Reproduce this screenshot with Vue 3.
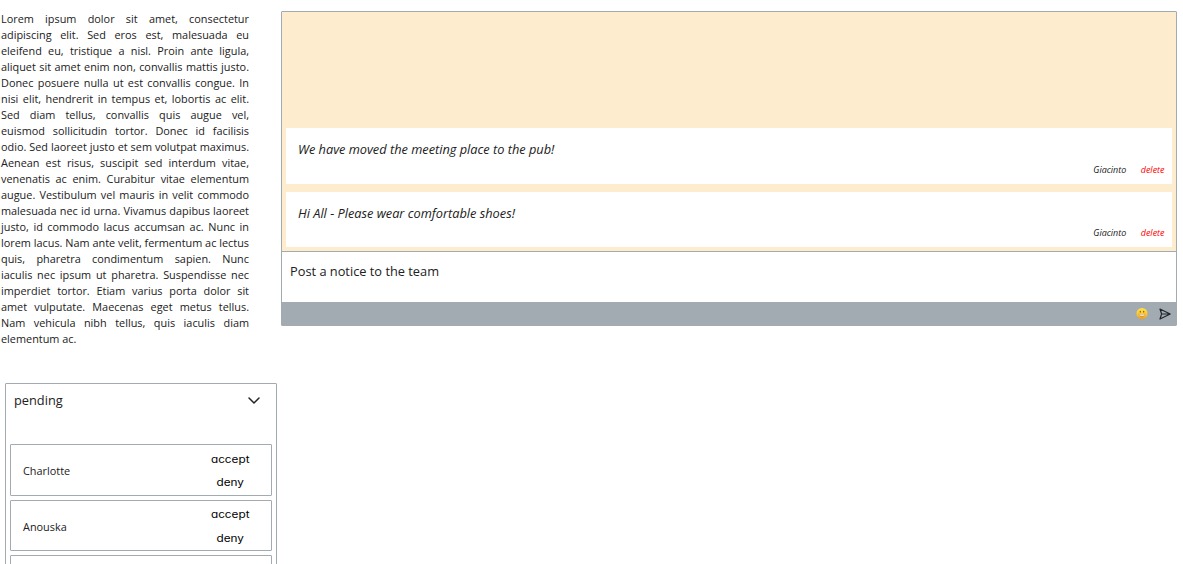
<script setup>
const notices = [
  { id: 1, text: 'We have moved the meeting place to the pub!', author: 'Giacinto' },
  { id: 2, text: 'Hi All - Please wear comfortable shoes!', author: 'Giacinto' },
]
const pending = ['Charlotte', 'Anouska', '']
</script>

<template>
  <div class="page">
    <aside class="side">
      <p class="about">
        Lorem ipsum dolor sit amet, consectetur adipiscing elit. Sed eros est, malesuada eu eleifend eu, tristique a nisl. Proin ante ligula, aliquet sit amet enim non, convallis mattis justo. Donec posuere nulla ut est convallis congue. In nisi elit, hendrerit in tempus et, lobortis ac elit. Sed diam tellus, convallis quis augue vel, euismod sollicitudin tortor. Donec id facilisis odio. Sed laoreet justo et sem volutpat maximus. Aenean est risus, suscipit sed interdum vitae, venenatis ac enim. Curabitur vitae elementum augue. Vestibulum vel mauris in velit commodo malesuada nec id urna. Vivamus dapibus laoreet justo, id commodo lacus accumsan ac. Nunc in lorem lacus. Nam ante velit, fermentum ac lectus quis, pharetra condimentum sapien. Nunc iaculis nec ipsum ut pharetra. Suspendisse nec imperdiet tortor. Etiam varius porta dolor sit amet vulputate. Maecenas eget metus tellus. Nam vehicula nibh tellus, quis iaculis diam elementum ac.
      </p>
      <section class="pending">
        <header class="pending-head">
          <span>pending</span>
          <svg class="chevron" width="12" height="8" viewBox="0 0 12 8"><path d="M1 1 L6 6 L11 1" fill="none" stroke="#212529" stroke-width="1.5" stroke-linecap="round" stroke-linejoin="round" /></svg>
        </header>
        <div v-for="(name, i) in pending" :key="i" class="member">
          <template v-if="name">
            <span class="name">{{ name }}</span>
            <div class="actions">
              <button>accept</button>
              <button>deny</button>
            </div>
          </template>
        </div>
      </section>
    </aside>

    <main class="board">
      <div class="notices">
        <article v-for="n in notices" :key="n.id" class="notice">
          <p class="notice-text">{{ n.text }}</p>
          <footer class="notice-foot">
            <span>{{ n.author }}</span>
            <span class="delete">delete</span>
          </footer>
        </article>
      </div>
      <div class="entry">Post a notice to the team</div>
      <div class="toolbar">
        <svg class="smile" width="12" height="12" viewBox="0 0 12 12">
          <defs>
            <linearGradient id="face" x1="0" y1="0" x2="0" y2="1">
              <stop offset="0" stop-color="#ffe24a" />
              <stop offset="0.6" stop-color="#fcc62e" />
              <stop offset="1" stop-color="#ee9a1c" />
            </linearGradient>
          </defs>
          <circle cx="6" cy="5.5" r="5.5" fill="url(#face)" />
          <ellipse cx="4.3" cy="3.7" rx="0.6" ry="0.9" fill="#7b5012" />
          <ellipse cx="7.7" cy="3.7" rx="0.6" ry="0.9" fill="#7b5012" />
          <path d="M2.6 5.8 Q6 6.5 9.4 5.8 Q9 8.6 6 8.6 Q3 8.6 2.6 5.8Z" fill="#b87c1e" />
          <path d="M3.2 6.2 Q6 6.7 8.8 6.2 L8.4 7.4 Q6 7.9 3.6 7.4Z" fill="#fff" />
        </svg>
        <svg class="send" width="12" height="12" viewBox="0 0 12 12"><path d="M1 1 L11.2 6 L1 11 L2.6 6 Z M2.6 6 H11" fill="none" stroke="#212529" stroke-width="1.2" stroke-linejoin="round" /></svg>
      </div>
    </main>
  </div>
</template>

<style>
body {
  overflow: hidden;
  background: #fff;
}
</style>

<style scoped>
.page {
  display: flex;
  align-items: flex-start;
  box-sizing: border-box;
  height: 564px;
  overflow: hidden;
  font-family: "Open Sans", "Noto Sans", sans-serif;
  color: #212121;
}
.side {
  width: 281px;
  flex: none;
}
.about {
  width: 248px;
  margin: 11px 0 0 1px;
  font-size: 10.88px;
  line-height: 16px;
  text-align: justify;
}
.pending {
  box-sizing: border-box;
  width: 272px;
  height: 240px;
  margin: 36px 0 0 5px;
  padding: 0 4px;
  border: 1px solid #a3abb2;
  border-radius: 1px;
}
.pending-head {
  display: flex;
  justify-content: space-between;
  height: 60px;
  padding: 6px 12px 0 4px;
  box-sizing: border-box;
  font-size: 12.8px;
  line-height: 20px;
}
.chevron {
  margin-top: 7px;
}
.member {
  display: flex;
  align-items: center;
  justify-content: space-between;
  box-sizing: border-box;
  height: 52px;
  margin-bottom: 4px;
  padding: 2px 11px 0 12px;
  border: 1px solid #a3abb2;
  border-radius: 1px;
  font-size: 10.88px;
}
.member + .member {
  height: 51px;
}
.name {
  line-height: 16px;
  padding-bottom: 1px;
}
.member + .member .name {
  padding: 1px 0 0;
}
.actions {
  display: flex;
  flex-direction: column;
  align-items: center;
  width: 60px;
}
button {
  padding: 0;
  border: 0;
  background: none;
  color: #000;
  font-family: Inter, "Open Sans", sans-serif;
  font-feature-settings: "cv11";
  font-size: 10.5px;
  line-height: 23.5px;
  transform: scaleX(1.12);
}
.board {
  flex: none;
  box-sizing: border-box;
  width: 896px;
  margin-top: 11px;
  border: 1px solid #a3abb2;
  border-radius: 1px;
}
.notices {
  display: flex;
  flex-direction: column;
  justify-content: flex-end;
  gap: 8px;
  box-sizing: border-box;
  height: 240px;
  padding: 4px;
  border-bottom: 1px solid #a3abb2;
  background: #feeccf;
  font-style: italic;
}
.notice {
  box-sizing: border-box;
  height: 56px;
  padding: 11px 7.5px 0 12px;
  background: #fff;
}
.notice + .notice {
  height: 55px;
}
.notice-text {
  margin: 0;
  font-size: 12.78px;
  line-height: 20px;
}
.notice-foot {
  display: flex;
  justify-content: flex-end;
  gap: 14.5px;
  margin-top: 4px;
  font-size: 8.96px;
  line-height: 13px;
}
.notice + .notice .notice-foot {
  margin-top: 3px;
}
.delete {
  color: #f00;
}
.entry {
  box-sizing: border-box;
  height: 50px;
  padding: 9px 8px;
  font-size: 12.8px;
  line-height: 20px;
}
.toolbar {
  display: flex;
  align-items: center;
  justify-content: flex-end;
  gap: 11px;
  height: 23px;
  padding-right: 5px;
  background: #a3abb2;
}
</style>
